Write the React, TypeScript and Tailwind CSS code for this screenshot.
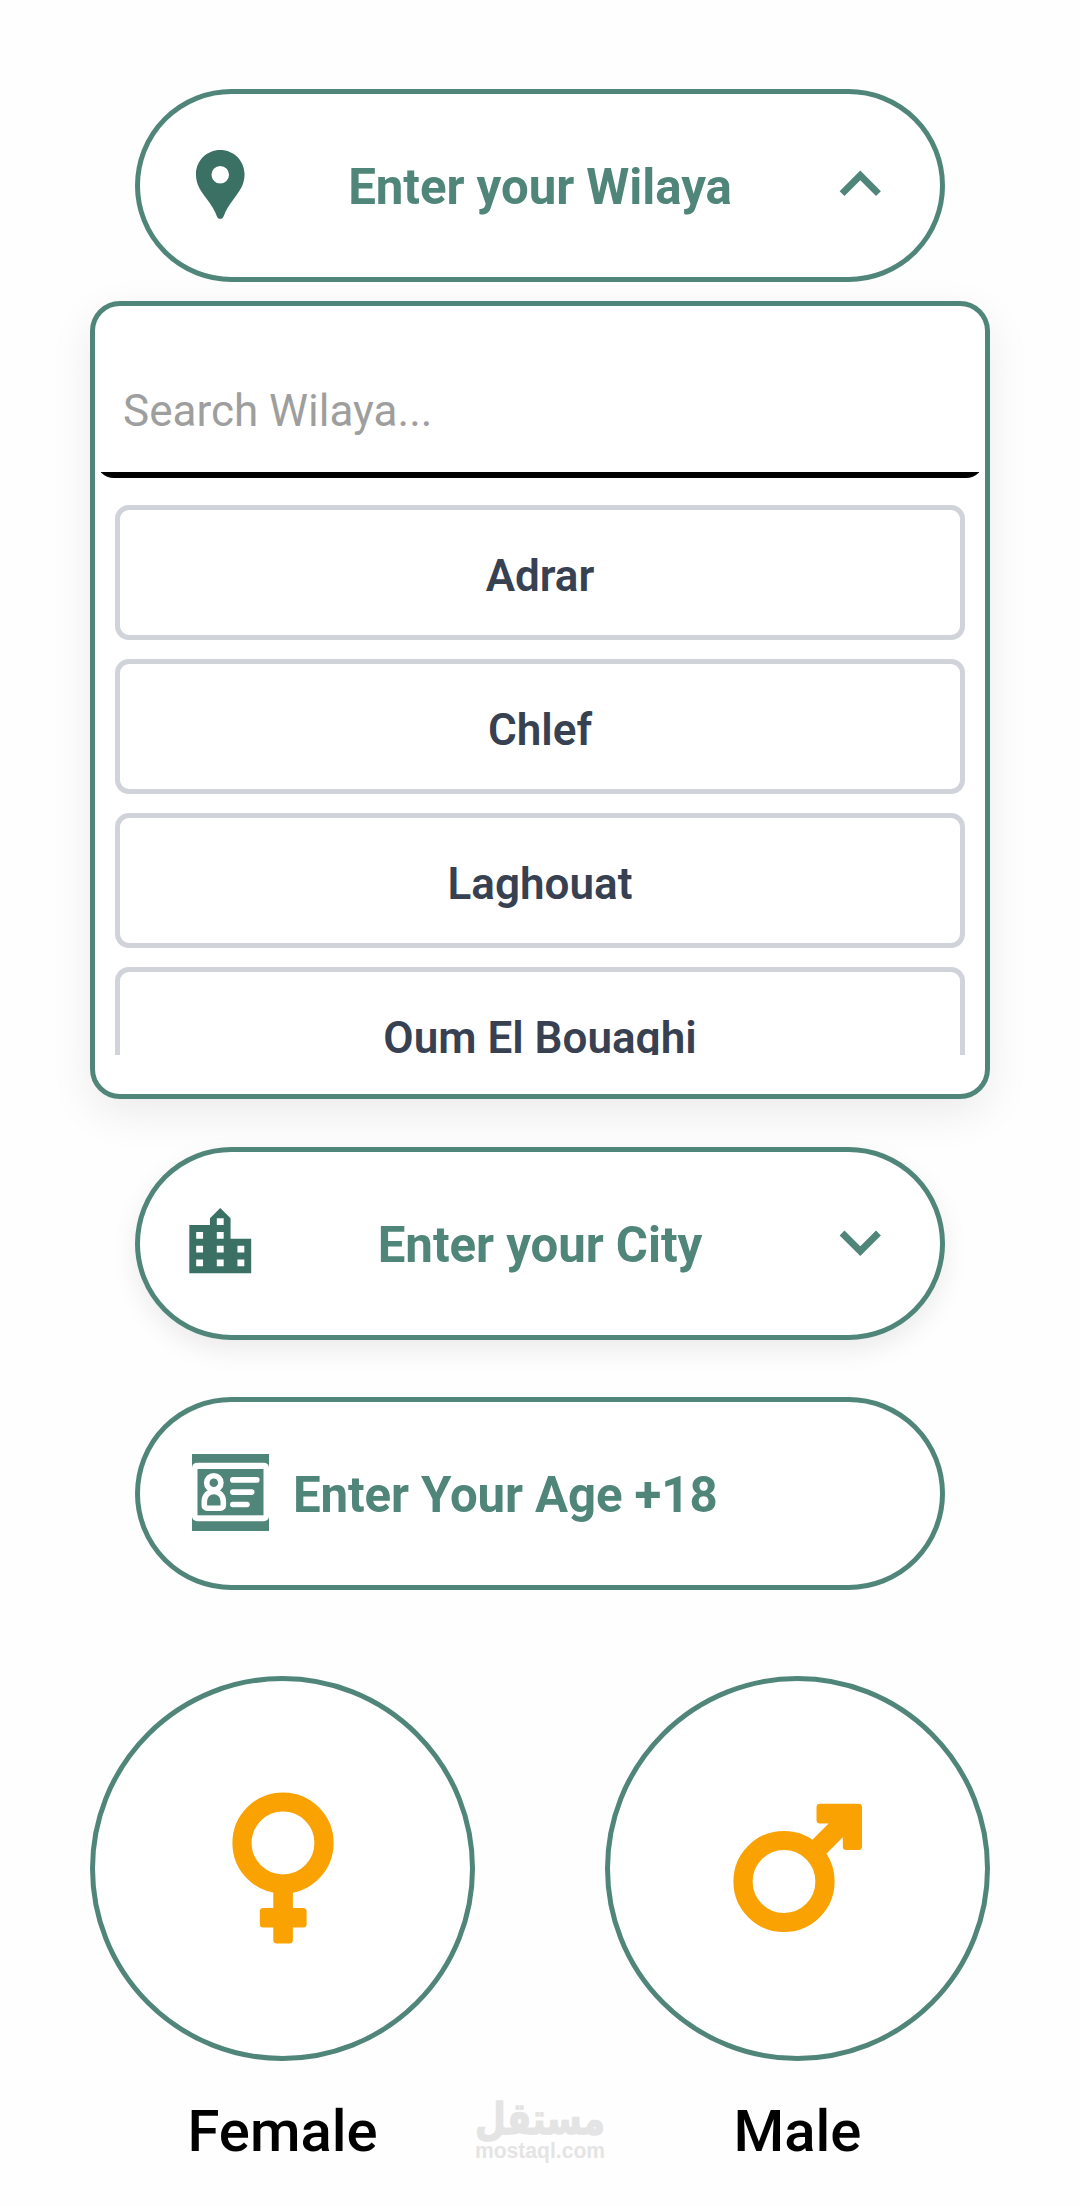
import React from "react";
import { MdExpandLess, MdExpandMore, MdLocationCity } from "react-icons/md";

const wilayas = ["Adrar", "Chlef", "Laghouat", "Oum El Bouaghi"];

const PinIcon = () => (
  <svg viewBox="0 0 24 24" className="size-[82.5px]" fill="currentColor">
    <path
      fillRule="evenodd"
      d="M12 2C8.05 2 4.93 5.13 4.93 9.1c0 3.1 1.5 5 3.1 7.1 1.35 1.75 2.35 3.35 2.95 5 .2.55.5.85 1.02.85s.82-.3 1.02-.85c.6-1.65 1.6-3.25 2.95-5 1.6-2.1 3.1-4 3.1-7.1C19.07 5.13 15.95 2 12 2Zm0 9.8a2.55 2.55 0 1 1 0-5.1 2.55 2.55 0 0 1 0 5.1Z"
    />
  </svg>
);

const IdCardIcon = () => (
  <svg viewBox="0 0 77 77" className="mb-[2px] size-[77px]">
    <rect width="77" height="77" fill="#50857a" />
    <rect y="8.7" width="77" height="58.6" rx="5" fill="#fff" />
    <rect x="5.5" y="15" width="66" height="46.3" fill="#50857a" />
    <g fill="none" stroke="#fff" strokeWidth="5.6" strokeLinecap="round">
      <circle cx="21.8" cy="28.8" r="7.1" />
      <path d="M12.3 51.4V47a9.5 9.5 0 0 1 19 0v4.4a2.8 2.8 0 0 1-2.8 2.8H15.1a2.8 2.8 0 0 1-2.8-2.8Z" />
      <path d="M40.8 25.9h24M40.8 38.1h18.9M40.8 50.5h14.2" />
    </g>
  </svg>
);

const FemaleIcon = () => (
  <svg viewBox="0 0 102 152" className="h-[152px] w-[102px]" fill="#f9a201">
    <circle cx="51" cy="51" r="41" fill="none" stroke="#f9a201" strokeWidth="19.2" />
    <rect x="41.3" y="96" width="19.6" height="55.5" rx="3.5" />
    <rect x="27.8" y="116" width="46.8" height="19.4" rx="3.5" />
  </svg>
);

const MaleIcon = () => (
  <svg viewBox="0 0 130 130" className="size-[130px]" fill="#f9a201">
    <circle cx="51" cy="78.5" r="41" fill="none" stroke="#f9a201" strokeWidth="19.2" />
    <path d="M87 .7h38.5a3.5 3.5 0 0 1 3.5 3.5v39.3a3.5 3.5 0 0 1-3.5 3.5h-12.2a3.5 3.5 0 0 1-3.5-3.5V34.2L90.6 53.4 76.6 39.4 95.6 20.4H87a3.5 3.5 0 0 1-3.5-3.5V4.2A3.5 3.5 0 0 1 87 .7Z" />
  </svg>
);

interface SelectPillProps {
  icon: React.ReactNode;
  label: string;
  open?: boolean;
}

const SelectPill = ({ icon, label, open }: SelectPillProps) => (
  <button
    className={`flex h-[193px] w-[810px] items-center justify-between rounded-full border-5 border-[#50857a] bg-white pr-[39px] pb-[2px] pl-[39px] ${
      open ? "" : "shadow-[0_10px_26px_rgba(0,0,0,0.08)]"
    }`}
  >
    <span className="text-[#3b7164]">{icon}</span>
    <span className="pt-[6px] text-[49.2px] font-bold tracking-[-0.05px]">{label}</span>
    {open ? <MdExpandLess className="size-[82.5px]" /> : <MdExpandMore className="size-[82.5px]" />}
  </button>
);

const App = () => {
  return (
    <main className="flex h-[2206px] w-[1080px] flex-col items-center overflow-hidden bg-[#fefefe] pt-[89px] font-['Roboto',sans-serif] text-[#50857a]">
      {/* Wilaya */}
      <SelectPill icon={<PinIcon />} label="Enter your Wilaya" open />

      {/* Dropdown panel */}
      <div className="mt-[19px] h-[798px] w-[900px] shrink-0 rounded-[30px] border-5 border-[#50857a] bg-white shadow-[0_14px_44px_rgba(0,0,0,0.08)]">
        <div className="flex h-[166px] items-center pt-[44px] pl-[28px]">
          <span className="text-[44px] text-[#9e9e9e]">Search Wilaya...</span>
        </div>
        <div className="mx-px flex h-[6px] items-end overflow-hidden">
          <div className="h-[36px] w-full rounded-b-[18px] bg-black" />
        </div>

        <div className="mt-[27px] flex h-[550px] flex-col gap-[19px] overflow-hidden px-[20px]">
          {wilayas.map((name) => (
            <div
              key={name}
              className="flex h-[135px] shrink-0 items-center justify-center rounded-[14px] border-5 border-[#d1d3da] pt-[6px] text-[44px] font-semibold text-[#374151]"
            >
              {name}
            </div>
          ))}
        </div>
      </div>

      {/* City */}
      <div className="mt-[48px]">
        <SelectPill icon={<MdLocationCity className="size-[82.5px]" />} label="Enter your City" />
      </div>

      {/* Age */}
      <div className="mt-[57px] flex h-[193px] w-[810px] shrink-0 items-center gap-[24px] rounded-full border-5 border-[#50857a] bg-white pl-[52px]">
        <IdCardIcon />
        <span className="pt-[4px] text-[49.2px] font-bold tracking-[-0.1px]">Enter Your Age +18</span>
      </div>

      {/* Gender */}
      <div className="mt-[86px] flex w-[900px] items-start justify-between text-[58px] font-medium text-black">
        <div className="flex w-[385px] flex-col items-center">
          <div className="flex size-[385px] items-center justify-center rounded-full border-5 border-[#50857a] bg-white pb-[2px]">
            <FemaleIcon />
          </div>
          <span className="mt-[36px] leading-[68px]">Female</span>
        </div>

        {/* Watermark */}
        <svg viewBox="0 0 130 90" className="h-[90px] w-[130px] self-end overflow-visible text-[#e4e4e4]" fill="currentColor">
          <text
            x="65"
            y="59"
            textAnchor="middle"
            textLength="130"
            lengthAdjust="spacingAndGlyphs"
            direction="rtl"
            stroke="currentColor"
            strokeWidth="1.4"
            strokeLinejoin="round"
            className="font-['DejaVu_Sans',sans-serif] text-[44px] font-bold"
          >
            مستقل
          </text>
          <text
            x="0"
            y="82.7"
            textLength="130"
            lengthAdjust="spacingAndGlyphs"
            className="font-['Liberation_Sans',sans-serif] text-[22px] font-bold"
          >
            mostaql.com
          </text>
        </svg>

        <div className="flex w-[385px] flex-col items-center">
          <div className="flex size-[385px] items-center justify-center rounded-full border-5 border-[#50857a] bg-white pb-[2px]">
            <MaleIcon />
          </div>
          <span className="mt-[36px] leading-[68px]">Male</span>
        </div>
      </div>
    </main>
  );
};

export default App;
